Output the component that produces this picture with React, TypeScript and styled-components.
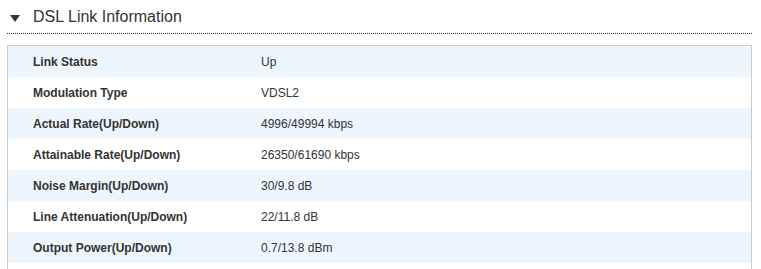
import styled, { createGlobalStyle } from 'styled-components';

const GlobalStyle = createGlobalStyle`
  body {
    margin: 0;
    background: #fff;
    font-family: 'Liberation Sans', Arial, sans-serif;
  }
`;

const rows = [
  { label: 'Link Status', value: 'Up' },
  { label: 'Modulation Type', value: 'VDSL2' },
  { label: 'Actual Rate(Up/Down)', value: '4996/49994 kbps' },
  { label: 'Attainable Rate(Up/Down)', value: '26350/61690 kbps' },
  { label: 'Noise Margin(Up/Down)', value: '30/9.8 dB' },
  { label: 'Line Attenuation(Up/Down)', value: '22/11.8 dB' },
  { label: 'Output Power(Up/Down)', value: '0.7/13.8 dBm' },
  { label: '', value: '' },
];

function App() {
  return (
    <>
      <GlobalStyle />
      <Section>
        <Header>
          <Arrow width='10' height='7' viewBox='0 0 10 7'>
            <polygon points='0,0 10,0 5,7' fill='#333' />
          </Arrow>
          <Title>DSL Link Information</Title>
        </Header>
        <Panel>
          {rows.map((row, i) => (
            <Row key={i} $shaded={i % 2 === 0}>
              <Label>{row.label}</Label>
              <Value>{row.value}</Value>
            </Row>
          ))}
        </Panel>
      </Section>
    </>
  );
}

const Section = styled.div`
  padding: 0 9px 0 7px;
`;

const Header = styled.div`
  display: flex;
  align-items: center;
  height: 33px;
  border-bottom: 1px dotted #333;
`;

const Arrow = styled.svg`
  margin: 3px 13px 0 3px;
`;

const Title = styled.h2`
  margin: 0;
  font-size: 16px;
  font-weight: normal;
  color: #333;
`;

const Panel = styled.div`
  margin-top: 11px;
  border: 1px solid #ccc;
`;

const Row = styled.div<{ $shaded: boolean }>`
  display: grid;
  grid-template-columns: 253px 1fr;
  align-items: center;
  height: 31px;
  font-size: 12px;
  color: #333;
  background: ${(p) => (p.$shaded ? '#eef6fd' : '#fff')};
`;

const Label = styled.div`
  padding-left: 25px;
  font-weight: bold;
`;

const Value = styled.div``;

export default App;
